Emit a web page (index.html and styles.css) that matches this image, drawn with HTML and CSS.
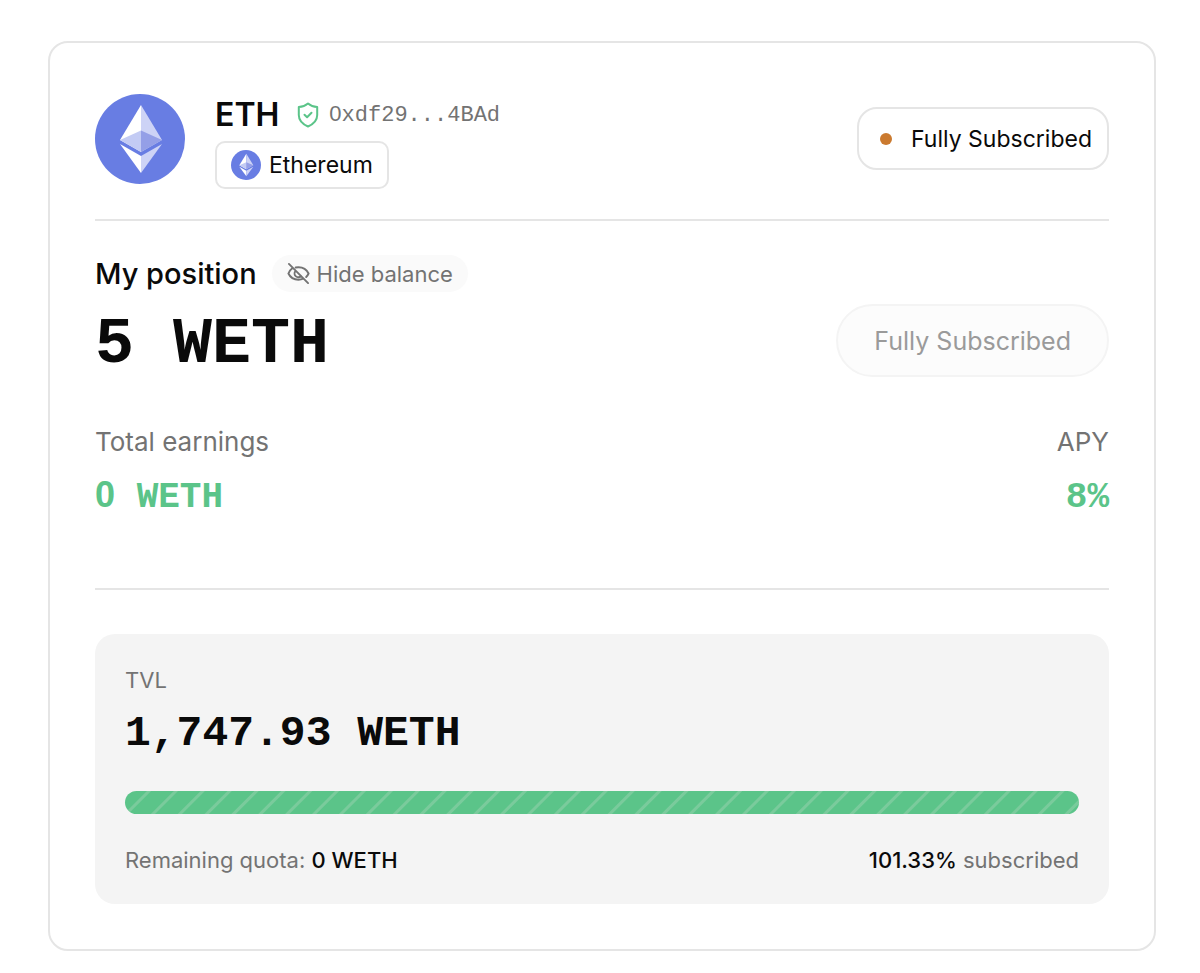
FILE: index.html
```html
<!DOCTYPE html>
<html lang="en">
<head>
<meta charset="utf-8">
<meta name="viewport" content="width=device-width, initial-scale=1">
<title>ETH vault</title>
<link rel="stylesheet" href="styles.css">
</head>
<body>
<svg class="sprite" aria-hidden="true">
  <symbol id="eth" viewBox="0 0 90 90">
    <circle cx="45" cy="45" r="45" fill="#687de3"/>
    <path d="M46 11 25 46 46 58Z" fill="#fff"/>
    <path d="M46 11 67 46 46 58Z" fill="#cdd3f6"/>
    <path d="M46 36.500 25 46 46 58Z" fill="#c3cbf4"/>
    <path d="M46 36.500 67 46 46 58Z" fill="#949fe7"/>
    <path d="M25 50 46 62V79Z" fill="#fff"/>
    <path d="M67 50 46 62V79Z" fill="#cdd3f6"/>
  </symbol>
</svg>
<main class="card">
  <header class="header">
    <svg class="logo" role="img" aria-label="Ethereum logo"><use href="#eth"/></svg>
    <div class="identity">
      <div class="title-row">
        <h1 class="title">ETH</h1>
        <div class="address">
          <svg class="shield" viewBox="0 0 24 26" aria-hidden="true"><path d="M12 1.500c2.600 2.200 5.500 3.300 9.200 3.500v8c0 5.500-3.500 9-9.200 11.500C6.300 22 2.800 18.500 2.800 13V5C6.500 4.800 9.400 3.700 12 1.500Z"/><path d="m8.500 12.700 2.600 2.500 4.400-4.400"/></svg>
          <span class="mono"><span class="zero">0</span>xdf29...4BAd</span>
        </div>
      </div>
      <div class="chip"><svg class="chip-logo" aria-hidden="true"><use href="#eth"/></svg>Ethereum</div>
    </div>
    <div class="status"><span class="dot"></span>Fully Subscribed</div>
  </header>

  <section class="position">
    <div class="position-head">
      <h2 class="position-title">My position</h2>
      <button class="hide" type="button">
        <svg class="eye" viewBox="0 0 24 24" aria-hidden="true"><path d="M2 2l20 20M5.500 6.500C3.700 7.800 2.300 9.800 1.500 12c2 4.300 6 6.500 10.500 6.500 1.800 0 3.500-.4 5-1.100M9 5.700c1-.2 2-.3 3-.3 4.500 0 8.500 2.300 10.500 6.600-.6 1.400-1.500 2.600-2.500 3.600M8.800 9.500a3.800 3.800 0 0 0 6 5"/></svg>
        Hide balance
      </button>
    </div>
    <div class="balance-row">
      <strong class="balance mono">5 WETH</strong>
      <button class="subscribe" type="button" disabled>Fully Subscribed</button>
    </div>
    <dl class="stats">
      <div class="stat"><dt>Total earnings</dt><dd class="mono"><span class="zero">0</span> WETH</dd></div>
      <div class="stat stat-end"><dt>APY</dt><dd class="mono">8%</dd></div>
    </dl>
  </section>

  <section class="tvl">
    <h2 class="tvl-label">TVL</h2>
    <strong class="tvl-value mono">1,747.93 WETH</strong>
    <div class="bar" role="progressbar" aria-label="Subscribed" aria-valuemin="0" aria-valuemax="100" aria-valuenow="100"></div>
    <div class="quota">
      <span>Remaining quota: <b>0 WETH</b></span>
      <span><b>101.33%</b> subscribed</span>
    </div>
  </section>
</main>
</body>
</html>
```
FILE: styles.css
```css
* { box-sizing: border-box; }
body {
  margin: 0;
  padding: 41px 44px 23px 48px;
  background: #fff;
  color: #0a0a0a;
  font-family: Inter, sans-serif;
}
h1, h2, dl, dd { margin: 0; }
button { font: inherit; }
.sprite { position: absolute; width: 0; height: 0; }
.mono { font-family: "Liberation Mono", monospace; }
.zero { font-family: "Liberation Sans", sans-serif; line-height: 1; }

.card {
  padding: 51px 45px 45px;
  border: 2px solid #e5e5e5;
  border-radius: 20px;
}

.header {
  display: flex;
  align-items: flex-start;
  gap: 30px;
  padding-bottom: 30px;
  border-bottom: 2px solid #e5e5e5;
}
.logo { width: 90px; height: 90px; flex: none; }
.identity { display: flex; flex-direction: column; align-items: flex-start; gap: 5px; }
.title-row { display: flex; align-items: center; gap: 17px; }
.title { font-size: 32px; line-height: 42px; font-weight: 600; }
.address { display: flex; align-items: center; gap: 9px; font-size: 22px; color: #737373; }
.shield {
  width: 24px;
  height: 26px;
  fill: none;
  stroke: #5bc489;
  stroke-width: 2;
  stroke-linecap: round;
  stroke-linejoin: round;
}
.chip {
  display: flex;
  align-items: center;
  gap: 8px;
  height: 48px;
  padding: 0 14px;
  border: 2px solid #e5e5e5;
  border-radius: 10px;
  font-size: 23px;
}
.chip-logo { width: 30px; height: 30px; }
.status {
  display: flex;
  align-items: center;
  gap: 19px;
  height: 63px;
  margin: 13px 0 0 auto;
  padding: 0 15px 0 21px;
  border: 2px solid #e5e5e5;
  border-radius: 20px;
  font-size: 23px;
}
.dot { width: 12px; height: 12px; border-radius: 50%; background: #cb7a2f; }

.position { padding: 34px 0 69px; border-bottom: 2px solid #e5e5e5; }
.position-head { display: flex; align-items: center; gap: 15px; }
.position-title { font-size: 29px; line-height: 36px; font-weight: 500; }
.hide {
  display: flex;
  align-items: center;
  gap: 7px;
  height: 37px;
  padding: 0 15px;
  border: 0;
  border-radius: 19px;
  background: #fafafa;
  color: #737373;
  font-size: 22px;
}
.eye { width: 23px; height: 23px; fill: none; stroke: #737373; stroke-width: 2; stroke-linecap: round; }
.balance-row { display: flex; align-items: center; justify-content: space-between; margin-top: 12px; }
.balance { padding-top: 10px; font-size: 65px; line-height: 63px; }
.subscribe {
  height: 73px;
  padding: 0 36px;
  border: 2px solid #f4f4f4;
  border-radius: 37px;
  background: #fcfcfc;
  color: #9a9a9a;
  font-size: 25px;
}
.stats { display: flex; justify-content: space-between; margin-top: 49px; }
.stat dt { margin-bottom: 19px; color: #737373; font-size: 26px; line-height: 32px; }
.stat dd { color: #5bc489; font-size: 36px; line-height: 42px; font-weight: 700; }
.stat-end { text-align: right; }

.tvl {
  margin-top: 44px;
  padding: 30px;
  border-radius: 20px;
  background: #f4f4f4;
}
.tvl-label { color: #737373; font-size: 22px; line-height: 32px; font-weight: 400; }
.tvl-value { display: block; margin-top: 10px; font-size: 43px; line-height: 56px; }
.bar {
  height: 23px;
  margin: 29px 0 32px;
  border-radius: 12px;
  background: repeating-linear-gradient(135deg, #5bc489 0 15px, #7acb9c 16px 18px, #5bc489 19px);
}
.quota { display: flex; justify-content: space-between; color: #737373; font-size: 22px; line-height: 28px; }
.quota b { color: #0a0a0a; font-weight: 500; }
```
